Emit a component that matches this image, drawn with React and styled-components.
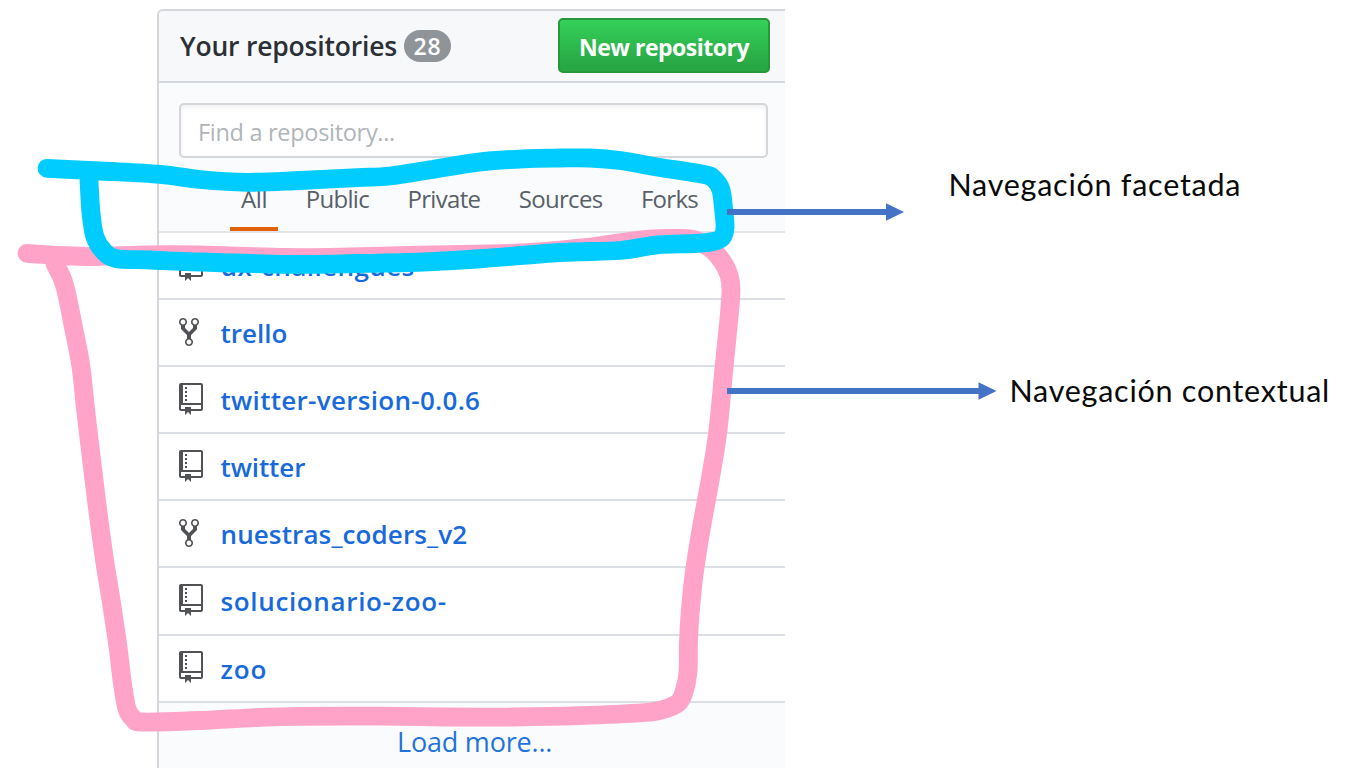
import React from "react";
import styled, { createGlobalStyle } from "styled-components";

const Global = createGlobalStyle`
  * { box-sizing: border-box; }
  body { margin: 0; background: #fff; font-family: "Open Sans", "Noto Sans", sans-serif; overflow: hidden; }
`;

const Slide = styled.main`
  position: relative;
  display: flex;
  width: 1350px;
  height: 768px;
  padding: 9px 0 0 157px;
  overflow: hidden;
`;

const Panel = styled.section`
  flex: none;
  width: 628px;
  height: 759px;
  border: solid #d3d7dc;
  border-width: 2px 0 0 2px;
  border-top-left-radius: 6px;
  background: #fafbfc;
  overflow: hidden;
`;

const Header = styled.header`
  display: flex;
  align-items: center;
  height: 72px;
  padding: 0 15px 0 21px;
  background: #f6f8fa;
  border-bottom: 2px solid #d3d7de;
`;

const Title = styled.h3`
  margin: 0;
  font-size: 26.5px;
  line-height: 36px;
  font-weight: 600;
  letter-spacing: -0.2px;
  color: #2b3036;
`;

const Counter = styled.span`
  display: flex;
  align-items: center;
  justify-content: center;
  width: 47px;
  height: 32px;
  margin-left: 7px;
  border-radius: 16px;
  background: #8f9499;
  color: #fff;
  font-size: 23px;
  line-height: 32px;
  font-weight: 600;
  letter-spacing: 0.7px;
`;

const NewButton = styled.button`
  width: 212px;
  height: 55px;
  margin: -1px 0 0 auto;
  padding: 3px 0 0;
  border: 2px solid #27963c;
  border-radius: 5px;
  background: linear-gradient(#34d058, #28a745 90%);
  color: #fff;
  font: 700 23px/32px "Open Sans", sans-serif;
  letter-spacing: -0.5px;
`;

const Filters = styled.div`
  height: 150px;
  padding: 20px 17px 0 20px;
  border-bottom: 2px solid #e3e5e8;
`;

const Search = styled.input`
  display: block;
  width: 589px;
  height: 55px;
  padding: 2px 17px 0;
  border: 2px solid #d3d7dc;
  border-radius: 5px;
  background: #fff;
  box-shadow: inset 0 2px 4px rgba(27, 31, 35, 0.07);
  font: 400 23.5px/32px "Open Sans", sans-serif;
  letter-spacing: -0.3px;
  &::placeholder { color: #b0b5ba; opacity: 1; }
`;

const Tabs = styled.nav`
  display: flex;
  gap: 16.5px;
  height: 73px;
  padding: 22px 0 0 51px;
`;

const Tab = styled.a`
  flex: none;
  padding: 3px 11px 0;
  height: 51px;
  border-bottom: 4px solid ${(p) => (p.$active ? "#e36209" : "transparent")};
  color: #586069;
  font-size: 24px;
  line-height: 32px;
  letter-spacing: ${(p) => (p.$active ? -0.35 : -0.7)}px;
`;

const List = styled.ul`
  margin: 0;
  padding: 0;
  list-style: none;
  background: #fff;
`;

const Item = styled.li`
  display: flex;
  align-items: flex-start;
  height: 67.1px;
  padding: 15.5px 0 0 20px;
  border-bottom: 2px solid #dcdfe3;
`;

const IconBox = styled.span`
  display: flex;
  flex: none;
  width: 41.5px;
`;

const RepoName = styled.a`
  margin-top: -0.5px;
  color: #186adb;
  font-size: 26px;
  line-height: 36px;
  font-weight: 600;
  letter-spacing: ${(p) => p.$track}px;
  white-space: nowrap;
`;

const LoadMore = styled.a`
  display: block;
  padding: 20.5px 0 0 238px;
  color: #1f73dc;
  font-size: 27px;
  line-height: 37px;
  letter-spacing: -0.2px;
`;

const Notes = styled.aside`
  display: flex;
  flex-direction: column;
  gap: 166px;
  padding: 155px 0 0 163.5px;
`;

const Note = styled.p`
  margin: 0 0 0 ${(p) => p.$indent || 0}px;
  font-family: Lato, "Open Sans", sans-serif;
  font-size: 30.5px;
  line-height: 40px;
  letter-spacing: 0.75px;
  color: #0a0a0a;
  white-space: nowrap;
`;

const Drawing = styled.svg`
  position: absolute;
  inset: 0;
  pointer-events: none;
`;

const RepoIcon = () => (
  <svg width="24" height="32" viewBox="0 0 12 16" fill="#505255">
    <path fillRule="evenodd" d="M4 9H3V8h1v1zm0-3H3v1h1V6zm0-2H3v1h1V4zm0-2H3v1h1V2zm8-1v12c0 .55-.45 1-1 1H6v2l-1.5-1.5L3 16v-2H1c-.55 0-1-.45-1-1V1c0-.55.45-1 1-1h10c.55 0 1 .45 1 1zm-1 10H1v2h2v-1h3v1h5v-2zm0-10H2v9h9V1z" />
  </svg>
);

const ForkIcon = () => (
  <svg width="20" height="32" viewBox="0 0 10 16" fill="#505255">
    <path fillRule="evenodd" d="M8 1a1.993 1.993 0 0 0-1 3.72V6L5 8 3 6V4.72A1.993 1.993 0 0 0 2 1a1.993 1.993 0 0 0-1 3.72V6.5l3 3v1.78A1.993 1.993 0 0 0 5 15a1.993 1.993 0 0 0 1-3.72V9.5l3-3V4.72A1.993 1.993 0 0 0 8 1zM2 4.2C1.34 4.2.8 3.65.8 3c0-.65.55-1.2 1.2-1.2.65 0 1.2.55 1.2 1.2 0 .65-.55 1.2-1.2 1.2zm3 10c-.66 0-1.2-.55-1.2-1.2 0-.65.55-1.2 1.2-1.2.65 0 1.2.55 1.2 1.2 0 .65-.55 1.2-1.2 1.2zm3-10c-.66 0-1.2-.55-1.2-1.2 0-.65.55-1.2 1.2-1.2.65 0 1.2.55 1.2 1.2 0 .65-.55 1.2-1.2 1.2z" />
  </svg>
);

const repos = [
  { name: "ux-challengues", track: 0.42 },
  { name: "trello", fork: true, track: 0 },
  { name: "twitter-version-0.0.6", track: 0.3 },
  { name: "twitter", track: -0.1 },
  { name: "nuestras_coders_v2", fork: true, track: 0.12 },
  { name: "solucionario-zoo-", track: 0.65 },
  { name: "zoo", track: 0.9 },
];

// Smooth freehand line through the given points (Catmull-Rom to Bézier).
const smooth = (pts) =>
  pts.slice(0, -1).reduce((d, p, i) => {
    const a = pts[i - 1] || p;
    const q = pts[i + 1];
    const b = pts[i + 2] || q;
    const c1 = [p[0] + (q[0] - a[0]) / 6, p[1] + (q[1] - a[1]) / 6];
    const c2 = [q[0] - (b[0] - p[0]) / 6, q[1] - (b[1] - p[1]) / 6];
    return `${d} C${c1} ${c2} ${q}`;
  }, `M${pts[0]}`);

const pinkLine = [
  [27, 253.3], [60, 255.5], [95, 256.5], [150, 254.8], [200, 255], [285, 257.5], [350, 257], [430, 255],
  [520, 253], [590, 247], [640, 240], [670, 238.5], [693, 239.5], [710, 248], [722, 261], [729, 275], [731, 290],
  [729, 318], [724, 368], [718, 430], [711, 475], [701, 530], [694, 575], [690, 615], [688.5, 642], [688, 672],
  [684, 692], [678, 703], [663, 709.5], [645, 712.5], [580, 715.7], [513, 717], [445, 717], [380, 716.2], [300, 716.3],
  [257, 717.5], [200, 720.5], [143, 722], [134, 719], [127, 709],
  [122, 680], [118, 647], [111, 600], [105, 563], [99, 520], [94, 480], [86, 413], [81, 367], [74, 330], [64.5, 285], [55, 264],
];

const cyanLine = [
  [47, 168.3], [100, 171], [160, 174.3], [200, 179.5], [247, 182.3], [300, 180.5], [357, 177.7], [390, 176],
  [430, 169.8], [477, 162.3], [523, 158.8], [560, 158], [590, 158], [620, 160.5], [657, 167], [703, 174.3],
  [714, 179], [721, 190], [724, 213], [725, 228], [722, 237.5], [713, 241.5], [695, 243.5], [657, 244.8], [620, 250.5],
  [560, 252.5], [483, 258.5], [423, 262], [357, 263.5], [290, 264.3], [200, 262], [150, 260], [117, 258.7],
  [104, 251.5], [95, 237], [91, 213], [89, 180],
];

export default function App() {
  return (
    <>
      <Global />
      <Slide>
        <Panel>
          <Header>
            <Title>Your repositories</Title>
            <Counter>28</Counter>
            <NewButton>New repository</NewButton>
          </Header>
          <Filters>
            <Search placeholder="Find a repository..." />
            <Tabs>
              <Tab $active>All</Tab>
              <Tab>Public</Tab>
              <Tab>Private</Tab>
              <Tab>Sources</Tab>
              <Tab>Forks</Tab>
            </Tabs>
          </Filters>
          <List>
            {repos.map((r) => (
              <Item key={r.name}>
                <IconBox>{r.fork ? <ForkIcon /> : <RepoIcon />}</IconBox>
                <RepoName $track={r.track}>{r.name}</RepoName>
              </Item>
            ))}
          </List>
          <LoadMore>Load more...</LoadMore>
        </Panel>
        <Notes>
          <Note>Navegación facetada</Note>
          <Note $indent={61}>Navegación contextual</Note>
        </Notes>
        <Drawing width="1350" height="768" viewBox="0 0 1350 768" fill="none">
          <g strokeWidth="18.8" strokeLinecap="round" strokeLinejoin="round">
            <path d={smooth(pinkLine)} stroke="#ffa3c9" />
            <path d={smooth(cyanLine)} stroke="#00ccff" />
          </g>
          <path d="M727 212H888M727 391H980" stroke="#4472c4" strokeWidth="6" />
          <path d="M886 203.3L904 212L886 220.7ZM978.500 382.300L996.500 391L978.500 399.700Z" fill="#4472c4" />
        </Drawing>
      </Slide>
    </>
  );
}
